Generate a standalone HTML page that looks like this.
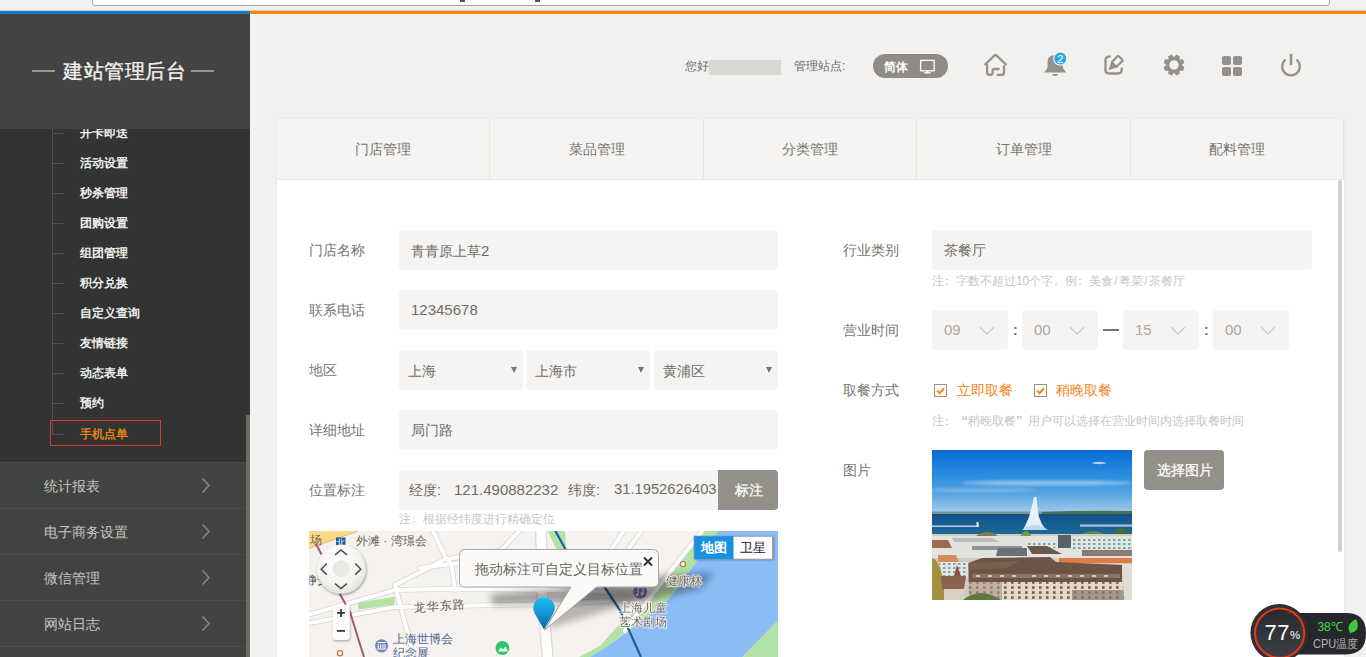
<!DOCTYPE html>
<html><head><meta charset="utf-8"><style>
*{margin:0;padding:0;box-sizing:border-box}
html,body{width:1366px;height:657px;overflow:hidden;background:#f2f1ef;font-family:"Liberation Sans",sans-serif;position:relative}
.abs{position:absolute}
.t{position:absolute;white-space:nowrap;line-height:1}
#addr{left:92px;top:-6px;width:1238px;height:12px;background:#fff;border:1px solid #a6a6a6;border-radius:0 0 3px 3px}
#bar1{left:0;top:11px;width:250px;height:3px;background:#0e7fc4}
#bar2{left:250px;top:11px;width:1116px;height:3px;background:#ff8500}
#sbhead{left:0;top:14px;width:250px;height:115px;background:#424342;z-index:2}
#sbmenu{left:0;top:129px;width:250px;height:333px;background:#323433}
#title{z-index:3;left:63px;top:61px;font-size:20px;color:#f4f2ee;letter-spacing:0.6px;-webkit-text-stroke:0.35px #f4f2ee}
.dash{position:absolute;z-index:3;height:2px;background:#9c968c;top:70px}
.vline{left:52px;top:129px;width:1px;height:306px;background:#4f4f4c}
.tick{position:absolute;left:52px;width:12px;height:1px;background:#4f4f4c}
.sub{position:absolute;left:80px;font-size:12px;font-weight:bold;color:#f0efec;line-height:1;white-space:nowrap}
#redbox{left:50px;top:420px;width:111px;height:26px;border:1px solid #e03838}
.mm{position:absolute;left:0;width:250px;height:46px;background:#414342;border-top:1px solid #4b4c4a}
.mm span{position:absolute;left:44px;top:16px;font-size:14px;color:#c9c5bd;line-height:1;white-space:nowrap}
.mm svg{position:absolute;left:200px;top:14px}
#sbscroll{left:246px;top:415px;width:4px;height:242px;background:#6c6a64}
.hdr{color:#6c6a66;font-size:12px}
#blur{left:709px;top:60px;width:72px;height:15px;background:#d9d7d4;filter:blur(0.6px)}
#pill{left:873px;top:54px;width:75px;height:24px;border-radius:12px;background:#8f8c86}
.icon{position:absolute}
#card{left:277px;top:119px;width:1067px;height:538px;background:#fff;box-shadow:0 0 3px rgba(0,0,0,0.06)}
#tabs{left:277px;top:119px;width:1067px;height:61px;background:#f5f4f2;border-bottom:1px solid #e8e7e4}
.tab{position:absolute;top:0;height:60px;width:214px;border-right:1px solid #e8e7e4;text-align:center;font-size:14px;color:#777470;line-height:60px}
#cscroll{left:1338px;top:180px;width:4px;height:372px;background:#d2d0cc;border-radius:2px}
.lbl{position:absolute;font-size:14px;color:#777470;line-height:1;white-space:nowrap}
.inp{position:absolute;height:40px;background:#f5f4f2;border-radius:4px}
.inp span{position:absolute;left:12px;top:13px;font-size:14px;color:#6f6c68;line-height:1;white-space:nowrap}
.inp .d{font-size:15px;position:static}
.note{position:absolute;font-size:12px;color:#c8c6c2;line-height:1;white-space:nowrap}
.note i{font-style:normal;display:inline-block;width:12px;text-align:center}
.note b{font-weight:normal;display:inline-block;text-align:center}
.btn{position:absolute;background:#93908a;color:#fff;font-size:14px;text-align:center;line-height:41px;border-radius:4px;-webkit-text-stroke:0.25px #fff;text-indent:1px}
</style></head><body>
<div class="abs" style="left:460px;top:0;width:4px;height:2px;background:#555"></div><div class="abs" style="left:537px;top:0;width:4px;height:2px;background:#555"></div>
<div class="abs" id="addr"></div><div class="abs" style="left:0;top:10px;width:1366px;height:1px;background:#cfcbc6"></div><div class="abs" id="bar1"></div><div class="abs" id="bar2"></div><div class="abs" style="left:460px;top:0;width:5px;height:1.5px;background:#555"></div><div class="abs" style="left:535px;top:0;width:5px;height:1.5px;background:#555"></div>
<div class="abs" id="sbhead"></div>
<div class="dash" style="left:32px;width:23px"></div><div class="t" id="title">建站管理后台</div><div class="dash" style="left:191px;width:23px"></div>
<div class="abs" id="sbmenu"></div><div class="abs vline"></div>
<div class="tick" style="top:133px"></div>
<div class="sub" style="top:127px">开卡即送</div>
<div class="tick" style="top:163px"></div>
<div class="sub" style="top:157px">活动设置</div>
<div class="tick" style="top:193px"></div>
<div class="sub" style="top:187px">秒杀管理</div>
<div class="tick" style="top:223px"></div>
<div class="sub" style="top:217px">团购设置</div>
<div class="tick" style="top:253px"></div>
<div class="sub" style="top:247px">组团管理</div>
<div class="tick" style="top:283px"></div>
<div class="sub" style="top:277px">积分兑换</div>
<div class="tick" style="top:313px"></div>
<div class="sub" style="top:307px">自定义查询</div>
<div class="tick" style="top:343px"></div>
<div class="sub" style="top:337px">友情链接</div>
<div class="tick" style="top:373px"></div>
<div class="sub" style="top:367px">动态表单</div>
<div class="tick" style="top:403px"></div>
<div class="sub" style="top:397px">预约</div>
<div class="tick" style="top:434px"></div>
<div class="sub" style="top:428px;color:#f28a10;font-weight:normal;-webkit-text-stroke:0.3px #f28a10">手机点单</div>
<div class="abs" id="redbox"></div>
<div class="mm" style="top:462px"><span>统计报表</span><svg width="12" height="17" viewBox="0 0 12 17"><path d="M2.5 1.5 L9 8.5 L2.5 15.5" fill="none" stroke="#85827c" stroke-width="1.8"/></svg></div>
<div class="mm" style="top:508px"><span>电子商务设置</span><svg width="12" height="17" viewBox="0 0 12 17"><path d="M2.5 1.5 L9 8.5 L2.5 15.5" fill="none" stroke="#85827c" stroke-width="1.8"/></svg></div>
<div class="mm" style="top:554px"><span>微信管理</span><svg width="12" height="17" viewBox="0 0 12 17"><path d="M2.5 1.5 L9 8.5 L2.5 15.5" fill="none" stroke="#85827c" stroke-width="1.8"/></svg></div>
<div class="mm" style="top:600px"><span>网站日志</span><svg width="12" height="17" viewBox="0 0 12 17"><path d="M2.5 1.5 L9 8.5 L2.5 15.5" fill="none" stroke="#85827c" stroke-width="1.8"/></svg></div>
<div class="mm" style="top:646px"><span></span></div>
<div class="abs" id="sbscroll"></div>
<div class="t hdr" style="left:685px;top:60px">您好</div><div class="abs" id="blur"></div><div class="t hdr" style="left:794px;top:60px">管理站点:</div>
<div class="abs" id="pill"><span class="t" style="left:10.5px;top:7px;font-size:12px;color:#fff;font-weight:bold">简体</span><svg class="icon" style="left:46px;top:5px" width="17" height="15" viewBox="0 0 17 15"><rect x="1.6" y="1.4" width="13.6" height="10.4" fill="none" stroke="#fff" stroke-width="1.3"/><path d="M8.4 11.8 V13.4 M5 13.9 H11.8" stroke="#fff" stroke-width="1.3"/></svg></div>
<svg class="icon" style="left:982px;top:52px" width="27" height="26" viewBox="0 0 27 26"><g fill="none" stroke="#94918b" stroke-width="2.3" stroke-linecap="round" stroke-linejoin="round"><path d="M3.3 12.3 L12.6 3.4 Q13.5 2.7 14.4 3.4 L23.9 12.5"/><path d="M5.1 12.8 V20.6 Q5.1 22.9 7.4 22.9 H8.4 Q10.6 22.9 10.6 20.6 V19.3 Q10.6 17 12.9 17 H16.7"/><path d="M15.8 22.9 H19.7 Q22 22.9 22 20.6 V14.3"/></g></svg>
<svg class="icon" style="left:1043px;top:50px" width="26" height="28" viewBox="0 0 26 28"><path d="M1.6 22.6 V21.9 Q4.6 19.6 4.6 16.5 V11.5 Q4.6 5.3 12.2 5.1 Q19.8 5.3 19.8 11.5 V16.5 Q19.8 19.6 22.8 21.9 V22.6 Z" fill="#94918b"/><path d="M9 23.9 H15.4 Q15 26 12.2 26 Q9.4 26 9 23.9 Z" fill="#94918b"/><circle cx="17.3" cy="8.6" r="6.6" fill="#2aa7e0" stroke="#f2f1ef" stroke-width="1.2"/><text x="17.3" y="12.7" text-anchor="middle" font-size="11.5" fill="#fff" font-family="Liberation Sans">2</text></svg>
<svg class="icon" style="left:1102px;top:52px" width="25" height="26" viewBox="0 0 25 26"><path d="M7.8 4.6 H7 Q3.5 4.6 3.5 8.1 V18 Q3.5 21.5 7 21.5 H16.2 Q19.7 21.5 19.7 18 V16.6" fill="none" stroke="#94918b" stroke-width="2.3" stroke-linecap="round"/><path d="M9.9 10 L15.4 4.2 Q16.1 3.5 16.8 4.2 L20.3 7.7 Q21 8.4 20.3 9.1 L14.3 14.9 Z" fill="none" stroke="#94918b" stroke-width="2.1" stroke-linejoin="round"/><path d="M9.3 9.6 L14.9 15.3 L6.5 18.2 Z" fill="#94918b"/></svg>
<svg class="icon" style="left:1161.6px;top:53.4px" width="24" height="24" viewBox="0 0 24 24"><path d="M19.75 12.88 L21.82 14.36 L20.61 17.28 L18.10 16.86 L16.86 18.10 L17.28 20.61 L14.36 21.82 L12.88 19.75 L11.12 19.75 L9.64 21.82 L6.72 20.61 L7.14 18.10 L5.90 16.86 L3.39 17.28 L2.18 14.36 L4.25 12.88 L4.25 11.12 L2.18 9.64 L3.39 6.72 L5.90 7.14 L7.14 5.90 L6.72 3.39 L9.64 2.18 L11.12 4.25 L12.88 4.25 L14.36 2.18 L17.28 3.39 L16.86 5.90 L18.10 7.14 L20.61 6.72 L21.82 9.64 L19.75 11.12 Z" fill="#94918b" stroke="#94918b" stroke-width="1.1" stroke-linejoin="round"/><circle cx="12" cy="12" r="4.7" fill="#f2f1ef"/></svg>
<svg class="icon" style="left:1222px;top:56px" width="20" height="20" viewBox="0 0 20 20"><rect x="0" y="0" width="9" height="9" rx="2" fill="#94918b"/><rect x="11" y="0" width="9" height="9" rx="2" fill="#94918b"/><rect x="0" y="11" width="9" height="9" rx="2" fill="#94918b"/><rect x="11" y="11" width="9" height="9" rx="2" fill="#94918b"/></svg>
<svg class="icon" style="left:1279px;top:52px" width="24" height="26" viewBox="0 0 24 26"><path d="M6.58 7.57 A8.8 8.8 0 1 0 17.42 7.57" fill="none" stroke="#94918b" stroke-width="2.3" stroke-linecap="butt"/><path d="M12 1.8 V13.2" stroke="#94918b" stroke-width="2.6"/></svg>
<div class="abs" id="card"></div>
<div class="abs" id="tabs"><div class="tab" style="left:0px;width:213px">门店管理</div><div class="tab" style="left:213px;width:214px">菜品管理</div><div class="tab" style="left:427px;width:213px">分类管理</div><div class="tab" style="left:640px;width:214px">订单管理</div><div class="tab" style="left:854px;width:213px">配料管理</div></div>
<div class="abs" id="cscroll"></div>
<div class="lbl" style="left:309px;top:243px">门店名称</div>
<div class="lbl" style="left:309px;top:303px">联系电话</div>
<div class="lbl" style="left:309px;top:363px">地区</div>
<div class="lbl" style="left:309px;top:423px">详细地址</div>
<div class="lbl" style="left:309px;top:483px">位置标注</div>
<div class="inp" style="left:399px;top:230px;width:379px"><span>青青原上草<b class="d" style="font-weight:normal">2</b></span></div>
<div class="inp" style="left:399px;top:290px;width:379px"><span style="top:12px;font-size:15px">12345678</span></div>
<div class="inp" style="left:399px;top:350px;width:124px"><span style="left:9px;top:14px">上海</span><svg style="position:absolute;right:6px;top:17px" width="6" height="6" viewBox="0 0 6 6"><path d="M0 0 H6 L3 6 Z" fill="#77746f"/></svg></div>
<div class="inp" style="left:526px;top:350px;width:124px"><span style="left:9px;top:14px">上海市</span><svg style="position:absolute;right:6px;top:17px" width="6" height="6" viewBox="0 0 6 6"><path d="M0 0 H6 L3 6 Z" fill="#77746f"/></svg></div>
<div class="inp" style="left:654px;top:350px;width:124px"><span style="left:9px;top:14px">黄浦区</span><svg style="position:absolute;right:6px;top:17px" width="6" height="6" viewBox="0 0 6 6"><path d="M0 0 H6 L3 6 Z" fill="#77746f"/></svg></div>
<div class="inp" style="left:399px;top:410px;width:379px"><span>局门路</span></div>
<div class="inp" style="left:399px;top:470px;width:379px"><span style="left:10px">经度:</span><span style="left:55px;top:12px;font-size:15px">121.490882232</span><span style="left:169px">纬度:</span><span style="left:215px;top:12px;font-size:14.75px">31.1952626403</span></div>
<div class="btn" style="left:718px;top:470px;width:60px;height:40px;border-radius:0 4px 4px 0">标注</div>
<div class="lbl" style="left:843px;top:243px">行业类别</div>
<div class="lbl" style="left:843px;top:323px">营业时间</div>
<div class="lbl" style="left:843px;top:383px">取餐方式</div>
<div class="lbl" style="left:843px;top:463px">图片</div>
<div class="inp" style="left:932px;top:230px;width:380px"><span>茶餐厅</span></div>
<div class="note" style="left:399px;top:513px"><i>注</i><i style="position:relative;left:-3px">：</i><i>根</i><i>据</i><i>经</i><i>纬</i><i>度</i><i>进</i><i>行</i><i>精</i><i>确</i><i>定</i><i>位</i></div>
<div class="note" style="left:932px;top:275px"><i>注</i><i style="position:relative;left:-3px">：</i><i>字</i><i>数</i><i>不</i><i>超</i><i>过</i><b style="width:6.5px">1</b><b style="width:6.5px">0</b><i>个</i><i>字</i><i style="position:relative;left:-3px">，</i><i>例</i><i style="position:relative;left:-3px">：</i><i>美</i><i>食</i><b style="width:6px">/</b><i>粤</i><i>菜</i><b style="width:6px">/</b><i>茶</i><i>餐</i><i>厅</i></div>
<div class="inp" style="left:932px;top:310px;width:76px"><span style="color:#aaa7a2;font-size:15px;top:12px">09</span><svg style="position:absolute;left:47px;top:16px" width="16" height="9" viewBox="0 0 16 9"><path d="M1 1 L8 8 L15 1" fill="none" stroke="#cfcdc9" stroke-width="1.5"/></svg></div>
<div class="inp" style="left:1022px;top:310px;width:76px"><span style="color:#aaa7a2;font-size:15px;top:12px">00</span><svg style="position:absolute;left:47px;top:16px" width="16" height="9" viewBox="0 0 16 9"><path d="M1 1 L8 8 L15 1" fill="none" stroke="#cfcdc9" stroke-width="1.5"/></svg></div>
<div class="inp" style="left:1123px;top:310px;width:76px"><span style="color:#aaa7a2;font-size:15px;top:12px">15</span><svg style="position:absolute;left:47px;top:16px" width="16" height="9" viewBox="0 0 16 9"><path d="M1 1 L8 8 L15 1" fill="none" stroke="#cfcdc9" stroke-width="1.5"/></svg></div>
<div class="inp" style="left:1213px;top:310px;width:76px"><span style="color:#aaa7a2;font-size:15px;top:12px">00</span><svg style="position:absolute;left:47px;top:16px" width="16" height="9" viewBox="0 0 16 9"><path d="M1 1 L8 8 L15 1" fill="none" stroke="#cfcdc9" stroke-width="1.5"/></svg></div>
<div class="t" style="left:1013px;top:323px;font-size:14px;color:#77746f;font-weight:bold">:</div>
<div class="t" style="left:1204px;top:323px;font-size:14px;color:#77746f;font-weight:bold">:</div>
<div class="abs" style="left:1103px;top:329px;width:16px;height:2px;background:#77746f"></div>
<div class="abs" style="left:934px;top:384px;width:13px;height:13px"><svg style="position:absolute;left:0;top:0" width="13" height="13" viewBox="0 0 13 13"><rect x="0.5" y="0.5" width="12" height="12" fill="#fff" stroke="#a58d73"/><path d="M3 6.6 L5.6 9.2 L10 4.2" fill="none" stroke="#f08a1e" stroke-width="2.1"/></svg></div><div class="t" style="left:957px;top:383px;font-size:14px;color:#f5861f">立即取餐</div>
<div class="abs" style="left:1034px;top:384px;width:13px;height:13px"><svg style="position:absolute;left:0;top:0" width="13" height="13" viewBox="0 0 13 13"><rect x="0.5" y="0.5" width="12" height="12" fill="#fff" stroke="#a58d73"/><path d="M3 6.6 L5.6 9.2 L10 4.2" fill="none" stroke="#f08a1e" stroke-width="2.1"/></svg></div><div class="t" style="left:1056px;top:383px;font-size:14px;color:#f5861f">稍晚取餐</div>
<div class="note" style="left:932px;top:414px"><i>注</i><i style="position:relative;left:-3px">：</i><i style="text-align:right;font-weight:bold;font-size:13px">“</i><i>稍</i><i>晚</i><i>取</i><i>餐</i><i style="text-align:left;font-weight:bold;font-size:13px">”</i><i>用</i><i>户</i><i>可</i><i>以</i><i>选</i><i>择</i><i>在</i><i>营</i><i>业</i><i>时</i><i>间</i><i>内</i><i>选</i><i>择</i><i>取</i><i>餐</i><i>时</i><i>间</i></div>
<div class="btn" style="left:1144px;top:450px;width:80px;height:40px">选择图片</div>
<svg class="abs" style="left:309px;top:531px" width="469" height="126" viewBox="0 0 469 126">
<defs>
<radialGradient id="navg" cx="0.45" cy="0.35" r="0.75"><stop offset="0" stop-color="#ffffff"/><stop offset="0.6" stop-color="#f3f3f0"/><stop offset="1" stop-color="#dcdcd8"/></radialGradient>
<linearGradient id="ping" x1="0" y1="0" x2="0" y2="1"><stop offset="0" stop-color="#1fc2f2"/><stop offset="1" stop-color="#0a66a6"/></linearGradient>
<filter id="blur3" x="-50%" y="-50%" width="200%" height="200%"><feGaussianBlur stdDeviation="3.5"/></filter>
<filter id="blur1" x="-50%" y="-50%" width="200%" height="200%"><feGaussianBlur stdDeviation="1.2"/></filter>
<filter id="halo" x="-20%" y="-20%" width="140%" height="140%"><feMorphology operator="dilate" radius="1" in="SourceAlpha" result="d"/><feFlood flood-color="#f4f0ea"/><feComposite in2="d" operator="in" result="h"/><feMerge><feMergeNode in="h"/><feMergeNode in="SourceGraphic"/></feMerge></filter>
</defs>
<rect width="469" height="126" fill="#f5f2ef"/>
<!-- yellow road top-left -->
<path d="M0 0 H49 L0 17.6 Z" fill="#fcd88a"/>
<path d="M49 0 L0 17.6" stroke="#e9b86a" stroke-width="1"/>
<!-- water + shore green -->
<path d="M391 0 L338 70 L308.7 95 L291 115 L270 126 L281 126 L299 115 L326 95 L356 72 L369.5 56 L389 28 L409 0 Z" fill="#b3e2a6"/>
<path d="M409 0 H469 V126 H281 L299 115 L326 95 L356 72 L369.5 56 L389 28 Z" fill="#8abcf6"/>
<path d="M469 89 V126 H433 Z" fill="#b3e2a6"/>
<!-- green strip near top road -->
<path d="M238.6 0 H256 L257 19.6 L248 19.6 Z" fill="#b3e2a6"/>
<!-- roads -->
<g fill="none" stroke="#dcd8d3" stroke-width="5.6" stroke-linecap="round" stroke-linejoin="round" id="rd">
<path d="M-5 85 L86 59 L136 58 L240 59 L300 61"/>
<path d="M-5 93 L86 76 L136 75 L240 73 L300 70"/>
<path d="M86 54 L106 130"/>
<path d="M86 54 L136 28.4 L191.5 19.6 L215 -5"/>
<path d="M121.7 -5 L136 25.4 L142.4 33 L146 59"/>
<path d="M111 37 L142.4 33 L175 30"/>
<path d="M232 -5 L233 60 L239 130" stroke-width="12"/>
<path d="M318 -5 L296 28 M336 -5 L312 28"/>
<path d="M397 -5 L338 70 L316 100"/>
</g>
<g fill="none" stroke="#ffffff" stroke-width="3.8" stroke-linecap="round" stroke-linejoin="round">
<path d="M-5 85 L86 59 L136 58 L240 59 L300 61"/>
<path d="M-5 93 L86 76 L136 75 L240 73 L300 70"/>
<path d="M86 54 L106 130"/>
<path d="M86 54 L136 28.4 L191.5 19.6 L215 -5"/>
<path d="M121.7 -5 L136 25.4 L142.4 33 L146 59"/>
<path d="M111 37 L142.4 33 L175 30"/>
<path d="M232 -5 L233 60 L239 130" stroke-width="9.5"/>
<path d="M318 -5 L296 28 M336 -5 L312 28"/>
<path d="M397 -5 L338 70 L316 100"/>
</g>
<!-- green patch -->
<path d="M49.3 71.6 L85.6 65.7 L85.6 73.6 L49.3 78.5 Z" fill="#b3e2a6"/>
<!-- metro lines -->
<path d="M246.4 0 L257.2 19.6 L295.5 56 L311 79.4 L332 126" fill="none" stroke="#1d5fa0" stroke-width="2.2"/>
<path d="M6.8 12.7 Q22 40 31.3 63.8 L41.2 81.4 L49 107 L55 126" fill="none" stroke="#a4587a" stroke-width="2"/>
<!-- labels -->
<g font-family="Liberation Sans" font-size="12">
<text x="1" y="12.5" fill="#6a6256">场</text>
<text x="47" y="13.5" fill="#6a6256">外滩 · 湾璟会</text>
<text x="-4" y="53" fill="#3a3a36">静安</text>
<text x="104.5" y="80.5" fill="#6a6256" letter-spacing="1.3" transform="rotate(-4 104.5 80.5)">龙华东路</text>
<text x="83.5" y="112" fill="#4e6494">上海世博会</text>
<text x="83.5" y="125.5" fill="#4e6494">纪念展</text>
</g>
<rect x="27" y="6.5" width="9.5" height="9" fill="#1a5e9a"/>
<text x="31.7" y="14.6" font-size="9" fill="#fff" text-anchor="middle" font-family="Liberation Sans">北</text>
<circle cx="72.6" cy="114.8" r="6.6" fill="#7587b6"/>
<path d="M68.6 111.5 H76.6 M69.3 113.3 V117.3 M71.7 113.3 V117.3 M74 113.3 V117.3 M76 113.3 V117.3 M68 118 H77.2" stroke="#fff" stroke-width="1"/>
<circle cx="193.4" cy="117" r="6.9" fill="#2ec46a"/>
<path d="M189 120.5 L192 116.5 L194 118.5 L196.5 115.5 L199 120.5 Z" fill="#fff"/>
<circle cx="31" cy="122.3" r="2.6" fill="#fff" stroke="#c07a3a" stroke-width="1.3"/>
<circle cx="374" cy="33" r="2.6" fill="#fff" stroke="#c07a3a" stroke-width="1.3"/>
<circle cx="331.2" cy="60.8" r="7" fill="#8a74c4"/>
<path d="M329 64 V57 L334 56 V63" fill="none" stroke="#fff" stroke-width="1.1"/><circle cx="328" cy="64" r="1.4" fill="#fff"/><circle cx="333" cy="63" r="1.4" fill="#fff"/>
<!-- info window shadow -->
<path d="M180 64 L240 58 L360 44 L405 42 L390 58 L330 72 L250 72 L185 74 Z" fill="#000" opacity="0.34" filter="url(#blur3)"/>
<path d="M262 60 L300 56 L350 60 L310 76 L237 98 Z" fill="#000" opacity="0.25" filter="url(#blur3)"/>
<g filter="url(#halo)" font-family="Liberation Sans" font-size="12" fill="#55524c">
<text x="357" y="53.5">健康林</text>
<text x="309.5" y="80.5">上海儿童</text>
<text x="309.5" y="94.5">艺术剧场</text>
</g>
<!-- info window -->
<path d="M155.5 18.5 H343.5 Q349.5 18.5 349.5 24.5 V50 Q349.5 56 343.5 56 H287.6 L235.6 99 L262 56 H155.5 Q150.5 56 150.5 50 V24.5 Q150.5 18.5 155.5 18.5 Z" fill="#fbfaf8" stroke="#a8a6a2" stroke-width="1"/>
<text x="166" y="43" font-size="14" fill="#666461" font-family="Liberation Sans">拖动标注可自定义目标位置</text>
<path d="M335 26.5 L343 34.5 M343 26.5 L335 34.5" stroke="#333" stroke-width="2"/>
<!-- pin -->
<path d="M235 98.5 L226 83 A10.8 10.8 0 1 1 244 83 Z" fill="url(#ping)"/>
<!-- nav control -->
<circle cx="33" cy="39.5" r="24.8" fill="#000" opacity="0.3" filter="url(#blur1)"/>
<circle cx="32.3" cy="38.2" r="24.6" fill="url(#navg)"/>
<circle cx="32.1" cy="37.6" r="7.8" fill="#e9e9e6" stroke="#e0e0dc" stroke-width="0.8"/>
<path d="M26.1 23.8 L32 19 L37.9 23.8 M26.1 52.6 L32 57.6 L37.9 52.6 M17.7 32.5 L12.2 38.2 L17.7 43.6 M46.3 32.5 L51.8 38.2 L46.3 43.6" fill="none" stroke="#4a4e50" stroke-width="1.5"/>
<!-- zoom control -->
<rect x="24" y="75" width="17.3" height="35.3" rx="3" fill="#000" opacity="0.3" filter="url(#blur1)"/>
<rect x="23.5" y="73.6" width="17.3" height="35.3" rx="3" fill="#fbfbf9"/>
<path d="M28 81.9 H36 M32 77.9 V85.9 M28 99.8 H36" stroke="#333" stroke-width="1.8"/>
<!-- map type -->
<rect x="386" y="6" width="79" height="23" fill="#000" opacity="0.3" filter="url(#blur1)"/>
<rect x="385.2" y="5.2" width="78.5" height="23" fill="#fff" stroke="#9a9a9a" stroke-width="1"/>
<rect x="385.2" y="5.2" width="39.3" height="23" fill="#1a90e0"/>
<text x="405" y="21.3" font-size="13" fill="#fff" font-weight="bold" text-anchor="middle" font-family="Liberation Sans">地图</text>
<text x="444" y="21.3" font-size="13" fill="#222" text-anchor="middle" font-family="Liberation Sans">卫星</text>
</svg>

<svg class="abs" style="left:932px;top:450px" width="200" height="150" viewBox="0 0 200 150">
<defs>
<linearGradient id="sky" x1="0" y1="0" x2="0" y2="1"><stop offset="0" stop-color="#0a6cd6"/><stop offset="0.35" stop-color="#238ade"/><stop offset="0.7" stop-color="#5aa6e2"/><stop offset="1" stop-color="#a8cdec"/></linearGradient>
<linearGradient id="lake" x1="0" y1="0" x2="0" y2="1"><stop offset="0" stop-color="#0f5288"/><stop offset="1" stop-color="#1e6a9c"/></linearGradient>
<pattern id="win" width="7" height="5" patternUnits="userSpaceOnUse"><rect width="7" height="5" fill="#e6d8c6"/><rect x="2" y="1.2" width="2.6" height="2.6" fill="#6e6258"/></pattern>
<pattern id="win2" width="5" height="4" patternUnits="userSpaceOnUse"><rect width="5" height="4" fill="#e4e6e4"/><rect x="1" y="1" width="2.5" height="2" fill="#7aa8a8"/></pattern>
<filter id="pb"><feGaussianBlur stdDeviation="1.6"/></filter>
<filter id="pb2"><feGaussianBlur stdDeviation="0.55"/></filter>
</defs>
<rect width="200" height="64" fill="url(#sky)"/>
<ellipse cx="115" cy="33" rx="85" ry="2.6" fill="#d4e6f4" opacity="0.55" filter="url(#pb)"/>
<ellipse cx="50" cy="40" rx="55" ry="2" fill="#c8def2" opacity="0.35" filter="url(#pb)"/>
<ellipse cx="167" cy="13" rx="7" ry="1.2" fill="#d8e8f5" opacity="0.8"/>
<g filter="url(#pb2)">
<rect y="61.5" width="200" height="3" fill="#7c9490"/>
<path d="M110 62 Q160 60 200 61 V67 Q160 66 110 64 Z" fill="#4e6e50"/>
<rect y="64" width="200" height="22" fill="url(#lake)"/>
<rect x="0" y="75.5" width="47" height="1.4" fill="#c8d8e4"/>
<rect x="44.5" y="72" width="2" height="5" fill="#f0f4f8"/>
<rect x="148" y="74.5" width="52" height="2.2" fill="#a8c0d0"/>
<path d="M102 47 Q100 56 97 67 Q94 74 91 80 L114 80 Q109 74 107 67 Q105 56 104.5 47 Z" fill="#e6f0f8"/>
<path d="M90 80 Q102 70 116 80 Z" fill="#c0d8ea"/>
</g>
<g filter="url(#pb2)">
<rect y="84" width="200" height="66" fill="#cfcbc4"/>
<path d="M44 86 Q55 78 66 86 Z" fill="#8a7a4a"/>
<path d="M88 87 Q94 75 100 87 Z" fill="#7a9a3a"/>
<path d="M150 84 Q162 78 172 84 Z" fill="#5e8a4a"/>
<path d="M180 84 Q190 72 198 84 Z" fill="#3e6e38"/>
<path d="M0 86 H200 V108 H0 Z" fill="#e2e2de"/>
<path d="M0 90 H16 L20 98 H0 Z" fill="#9a6a50"/>
<path d="M20 88 H60 L68 92 H22 Z" fill="#b8bcc0"/>
<path d="M40 96 H90 V100 H40 Z" fill="#909498"/>
<path d="M94 91 H126 V98 H94 Z" fill="url(#win2)"/>
<path d="M126 85 H139 V98 H126 Z" fill="#5a6268"/>
<path d="M139 89 H200 V99 H139 Z" fill="url(#win2)"/>
<path d="M95 96 H115 L130 104 H100 Z" fill="#6a5a50"/>
<path d="M66 98 H95 V106 H64 Z" fill="#6a7078"/>
<path d="M150 100 H200 V106 H150 Z" fill="#8a7a70"/>
<path d="M6 105 H24 L27 112 H6 Z" fill="#d88a58"/>
<path d="M127 108 H200 V113 H127 Z" fill="#e27a44"/>
<path d="M7 112 H36 V127 H7 Z" fill="url(#win2)"/>
<path d="M36.6 113 L50 108 L118 107 L124 112 L190 115 L190 132 H36.6 Z" fill="#6c5446"/>
<path d="M36.6 113 L88 111 L75 118 L36.6 120 Z" fill="#7a6050"/>
<path d="M36.6 132 H192 V150 H36.6 Z" fill="url(#win)"/>
<path d="M40 124 H188 V128 H40 Z" fill="#8a7464"/>
<path d="M44 125 h4 v2 h-4z M56 125 h4 v2 h-4z M68 125 h4 v2 h-4z M80 125 h4 v2 h-4z M100 125 h4 v2 h-4z M112 125 h4 v2 h-4z M124 125 h4 v2 h-4z M136 125 h4 v2 h-4z M148 125 h4 v2 h-4z M160 125 h4 v2 h-4z M172 125 h4 v2 h-4z" fill="#d8c8b0"/>
<path d="M36.6 132 H70 V150 H36.6 Z" fill="#a89484" opacity="0.6"/>
<path d="M140 140 H200 V150 H140 Z" fill="#8a7a70" opacity="0.7"/>
<path d="M190 114 H200 V150 H192 Z" fill="#e0dcd8"/>
<path d="M0 108 Q10 110 14 150 H0 Z" fill="#a09040"/>
<path d="M22 126 L25 115 L29 126 Z" fill="#8a5040"/>
<path d="M9 126 H34 L32 139 H10 Z" fill="#8a6050"/>
<path d="M12 139 H32 V150 H12 Z" fill="#d8d0c0"/>
<path d="M31 150 Q48 136 69 150 Z" fill="#5e7a40"/>
</g>
</svg>

<svg class="abs" style="left:1248px;top:602px" width="118" height="55" viewBox="0 0 118 55">
<defs><linearGradient id="cg" x1="0" y1="0" x2="0" y2="1"><stop offset="0" stop-color="#2a2b30"/><stop offset="1" stop-color="#3c3e46"/></linearGradient></defs>
<path d="M40 11 H98 Q118 11 118 31 Q118 52.4 98 52.4 H40 Z" fill="#26272c"/>
<circle cx="31.2" cy="30.8" r="28.8" fill="#2e2f34"/>
<circle cx="31.6" cy="31.2" r="24.6" fill="url(#cg)" stroke="#e5391a" stroke-width="2"/>
<text x="16.5" y="37.5" font-size="22" fill="#fff" font-family="Liberation Sans" textLength="25" lengthAdjust="spacing">77</text>
<text x="42" y="37" font-size="11.5" fill="#fff" font-family="Liberation Sans">%</text>
<text x="69.4" y="28.5" font-size="12.5" fill="#44dc44" font-family="Liberation Sans" textLength="25" lengthAdjust="spacingAndGlyphs">38℃</text>
<path d="M102 31 Q99 25 102.5 21 Q105 18.5 108 17 Q111 23 109 27.5 Q107 30 103.5 30.5 L102.5 32 Z" fill="#3ec83e"/>
<text x="65" y="45.5" font-size="12" fill="#b4b4b4" font-family="Liberation Sans" textLength="45" lengthAdjust="spacingAndGlyphs">CPU温度</text>
</svg>

</body></html>
